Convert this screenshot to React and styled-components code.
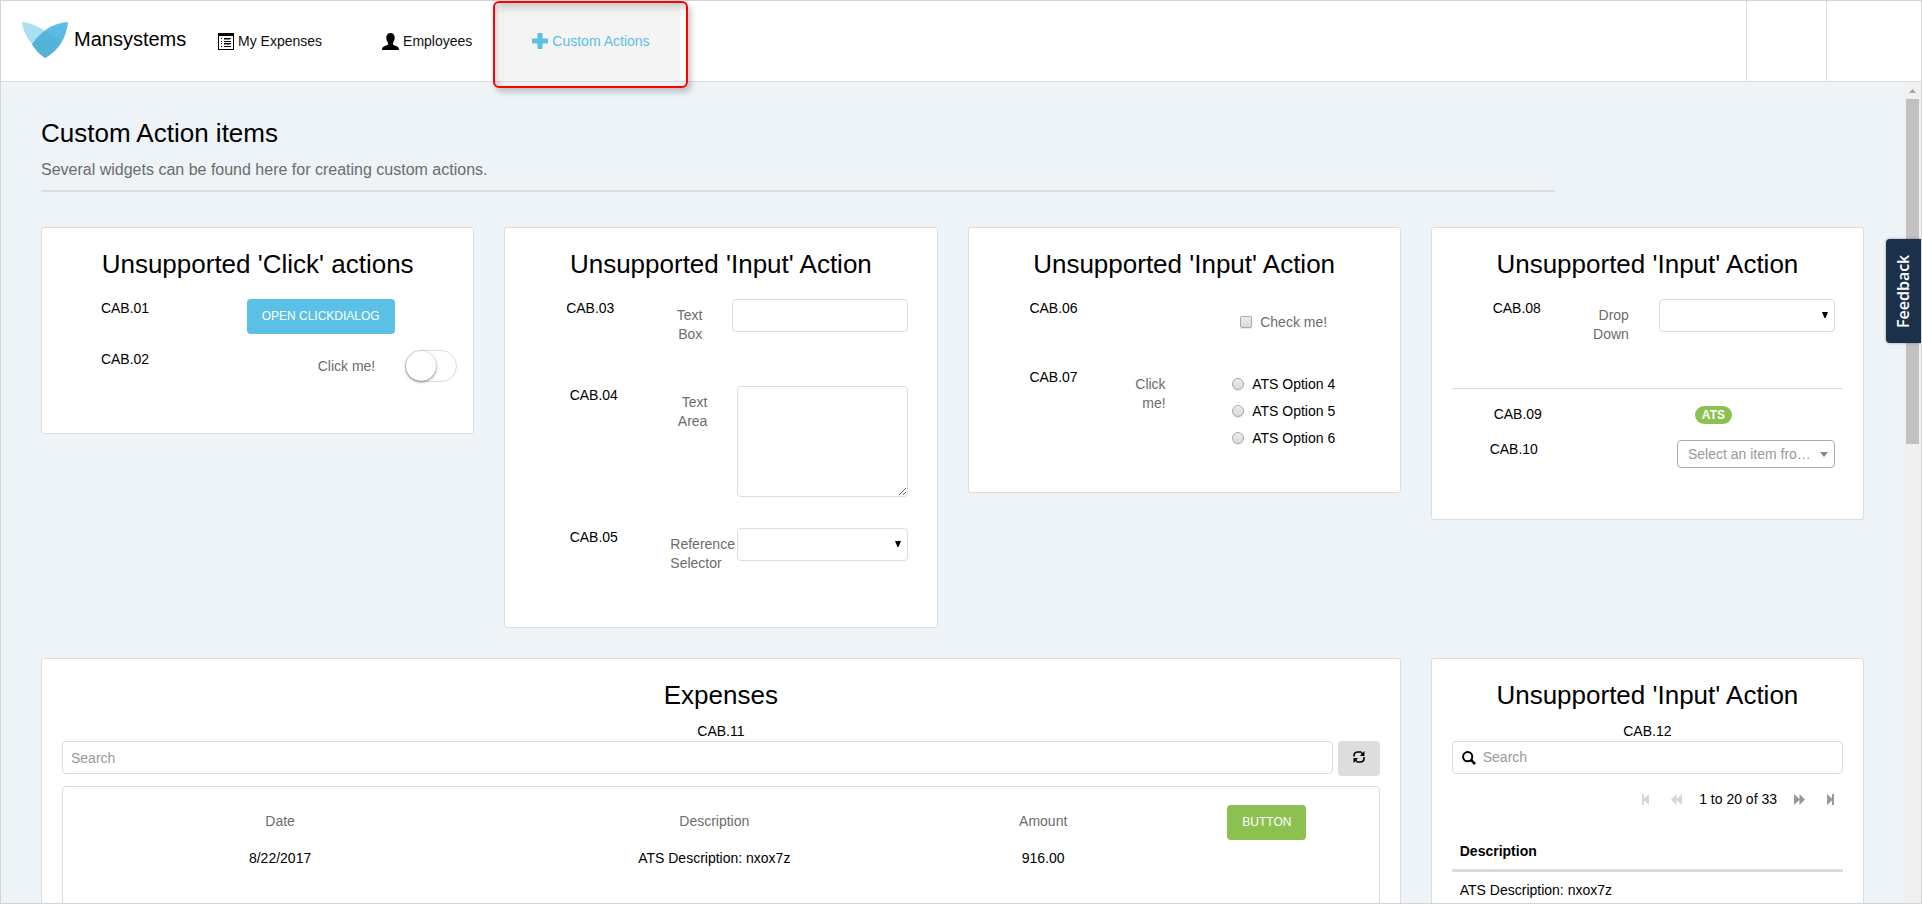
import React from "react";
import styled, { createGlobalStyle, css } from "styled-components";

const line = "#dcdcdc";
const muted = "#6c6c6c";
const blue = "#5bc0e6";
const green = "#8cc152";

const GlobalStyle = createGlobalStyle`
  *, *::before, *::after { box-sizing: border-box; }
  body {
    margin: 0;
    font: 14px/19px "Liberation Sans", Arial, sans-serif;
    color: #000;
  }
  button, input, select, textarea { font: inherit; color: inherit; margin: 0; }
`;

const Frame = styled.div`
  position: relative;
  display: flex;
  flex-direction: column;
  height: 100vh;
  overflow: hidden;
  border: 1px solid #d5d5d5;
  background: #edf3f6;
`;

/* Top bar */
const TopBar = styled.header`
  display: flex;
  flex: none;
  height: 81px;
  background: #fff;
  border-bottom: 1px solid ${line};
`;

const Brand = styled.a`
  display: flex;
  align-items: center;
  gap: 6px;
  width: 187px;
  padding: 0 0 3px 21px;
  color: #000;
  font-size: 20px;
  text-decoration: none;
`;

const Nav = styled.nav`
  display: flex;
  flex: 1;
`;

const NavLink = styled.a`
  position: relative;
  display: flex;
  align-items: center;
  gap: 4px;
  padding: 0 30px;
  color: ${(p) => (p.$active ? blue : "#111")};
  background: ${(p) => (p.$active ? "#f4f4f4" : "transparent")};
  text-decoration: none;
`;

const Highlight = styled.span`
  position: absolute;
  z-index: 2;
  inset: 0 -8px -7px -9px;
  border: 2px solid #fe0000;
  border-radius: 6px;
  box-shadow: 3px 4px 6px rgba(0, 0, 0, 0.22), inset 4px 5px 7px rgba(0, 0, 0, 0.16);
  pointer-events: none;
`;

const BarCell = styled.div`
  width: ${(p) => p.$width}px;
  border-left: 1px solid ${line};
`;

/* Scrolling body */
const Body = styled.div`
  display: flex;
  flex: 1;
  min-height: 0;
`;

const Main = styled.main`
  flex: 1;
  min-width: 0;
  padding: 35px 40px 40px;
  overflow-y: auto;
  scrollbar-width: none;
`;

const Grid = styled.div`
  display: grid;
  grid-template-columns: repeat(12, minmax(0, 1fr));
  gap: 30px;
  align-items: start;
`;

const Intro = styled.div`
  grid-column: span 10;
  margin-bottom: 5px;
  padding-bottom: 9px;
  border-bottom: 2px solid ${line};
`;

const PageTitle = styled.h1`
  margin: 0 0 10px;
  font-size: 26px;
  line-height: 32px;
  font-weight: 400;
`;

const Lead = styled.p`
  margin: 0;
  font-size: 16px;
  line-height: 22px;
  color: ${muted};
`;

const ScrollTrack = styled.div`
  display: flex;
  flex-direction: column;
  align-items: center;
  width: 17px;
  background: #f0f0f0;
`;

const ScrollUp = styled.svg`
  display: block;
  width: 17px;
  height: 17px;
`;

const ScrollThumb = styled.div`
  width: 13px;
  height: 42%;
  background: #c1c1c1;
`;

/* Cards */
const Card = styled.section`
  grid-column: span ${(p) => p.$span || 3};
  padding: 20px;
  background: #fff;
  border: 1px solid ${line};
  border-radius: 3px;
`;

const CardTitle = styled.h2`
  margin: 0 0 11px;
  font-size: 26px;
  line-height: 32px;
  font-weight: 400;
  text-align: center;
`;

const Rows = styled.div`
  padding-bottom: ${(p) => (p.$roomy ? 23 : 0)}px;
`;

const rowColumns = {
  button: "126fr 265fr",
  field: "130fr 77fr 176fr 8fr",
  narrow: "137fr 75fr 171fr 8fr",
  badge: "132fr 259fr",
  picker: "124fr 101fr 158fr 8fr",
};

const Row = styled.div`
  display: grid;
  grid-template-columns: ${(p) =>
    rowColumns[p.$kind]
      .split(" ")
      .map((w) => `minmax(0, ${w})`)
      .join(" ")};
  align-items: start;
  padding: 8px 0;
`;

const Code = styled.div`
  text-align: center;
`;

const FieldLabel = styled.label`
  padding: 7px 30px 26px 8px;
  color: ${muted};
  text-align: right;
`;

const Centered = styled.div`
  display: flex;
  justify-content: center;
`;

const SwitchCell = styled.div`
  display: grid;
  grid-template-columns: 1fr 48px;
  column-gap: 30px;
  text-align: right;
`;

const SwitchLabel = styled.label`
  padding-top: 7px;
  color: ${muted};
`;

const Switch = styled.input`
  appearance: none;
  display: block;
  width: 52px;
  height: 32px;
  border: 1px solid ${line};
  border-radius: 16px;
  background: #fff;
  &::before {
    content: "";
    display: block;
    width: 30px;
    height: 30px;
    border-radius: 50%;
    background: #fff;
    box-shadow: 0 1px 3px rgba(0, 0, 0, 0.5);
  }
`;

const Button = styled.button`
  height: 35px;
  padding: 0 15px;
  border: 0;
  border-radius: 4px;
  background: ${(p) => (p.$tone === "green" ? green : blue)};
  color: #fff;
  font-size: 12px;
  line-height: 19px;
  text-transform: uppercase;
`;

const IconButton = styled.button`
  display: flex;
  flex: none;
  justify-content: center;
  padding: 9px 0 0;
  width: 42px;
  height: 35px;
  border: 0;
  border-radius: 4px;
  background: #ddd;
`;

const fieldBox = css`
  display: block;
  width: 100%;
  height: 33px;
  padding: 0 8px;
  border: 1px solid ${line};
  border-radius: 4px;
  background: #fff;
  &::placeholder { color: #999; opacity: 1; }
`;

const TextInput = styled.input`${fieldBox}`;

const TextArea = styled.textarea`
  ${fieldBox}
  height: 111px;
  margin-bottom: 15px;
`;

const SelectWrap = styled.div`
  position: relative;
`;

const Select = styled.select`
  ${fieldBox}
  appearance: none;
`;

const PickerSelect = styled(Select)`
  height: 28px;
  padding: 0 20px 0 10px;
  border-color: #aaa;
  color: #999;
`;

const Arrow = styled.svg`
  position: absolute;
  top: ${(p) => (p.$small ? 12 : 13)}px;
  right: 7px;
  display: block;
  pointer-events: none;
`;

const OptionList = styled.div`
  padding-bottom: 15px;
`;

const Option = styled.label`
  display: flex;
  align-items: center;
  gap: 8px;
  padding: ${(p) => (p.$muted ? "13px 0 5px" : "6px 0 1px")};
  line-height: 20px;
  color: ${(p) => (p.$muted ? muted : "#000")};
`;

const Tick = styled.input`
  appearance: none;
  width: 12px;
  height: 12px;
  border: 1px solid #a9a9a9;
  border-radius: ${(p) => (p.type === "radio" ? "50%" : "2px")};
  background: linear-gradient(#ececec, #dadada);
  box-shadow: 0 1px 1px rgba(0, 0, 0, 0.1);
`;

const Divider = styled.hr`
  height: 1px;
  margin: 10px 0 8px;
  border: 0;
  background: ${line};
`;

const Badge = styled.span`
  height: 18px;
  margin-top: 1px;
  padding: 0 7px;
  border-radius: 9px;
  background: ${green};
  color: #fff;
  font-size: 12px;
  font-weight: 700;
  line-height: 18px;
`;

/* Expenses */
const SearchRow = styled.div`
  display: flex;
  gap: 5px;
  margin-bottom: 10px;
`;

const ListBox = styled.div`
  padding: 10px 0 60px;
  border: 1px solid ${line};
  border-radius: 4px;
`;

const ExpenseTable = styled.table`
  width: 100%;
  table-layout: fixed;
  border-collapse: collapse;
  text-align: center;
  th {
    padding: 15px 0 18px;
    color: ${muted};
    font-weight: 400;
  }
  td { padding: 0; }
  td[rowspan] { padding-top: 8px; vertical-align: top; }
`;

const Col = styled.col`
  width: ${(p) => p.$width}%;
`;

/* Search grid */
const SearchBox = styled.label`
  ${fieldBox}
  display: flex;
  align-items: center;
  gap: 7px;
  padding: 0 9px;
`;

const BareInput = styled.input`
  flex: 1;
  min-width: 0;
  padding: 0;
  border: 0;
  outline: 0;
  background: none;
  &::placeholder { color: #999; opacity: 1; }
`;

const Pager = styled.div`
  display: flex;
  justify-content: flex-end;
  gap: 6px;
  padding: 16px 0 25px;
`;

const PagerText = styled.span`
  padding: 0 4px;
`;

const PagerButton = styled.button`
  display: flex;
  justify-content: center;
  align-items: center;
  width: 25px;
  height: 19px;
  padding: 0;
  border: 0;
  background: none;
  color: #999;
  &:disabled { color: #d6d6d6; }
`;

const DataTable = styled.table`
  width: 100%;
  border-collapse: separate;
  border-spacing: 0;
  text-align: left;
  th { padding: 8px; border-bottom: 3px solid ${line}; }
  td { padding: 9px 8px; }
`;

const Feedback = styled.button`
  position: absolute;
  z-index: 3;
  top: 238px;
  right: 0;
  width: 35px;
  height: 104px;
  padding: 0;
  border: 0;
  border-radius: 0 4px 4px 0;
  background: #1b3049;
  color: #fff;
  font: 600 16px/33px "Open Sans", "Noto Sans", sans-serif;
  writing-mode: vertical-rl;
  transform: rotate(180deg);
  box-shadow: 0 0 3px rgba(0, 0, 0, 0.35);
`;

function Logo() {
  return (
    <svg width="46" height="36" viewBox="0 0 46 36" aria-hidden="true">
      <defs>
        <linearGradient id="wing" x1="0" y1="0" x2="0" y2="1">
          <stop offset="0" stopColor="#57c0e8" />
          <stop offset="1" stopColor="#5ab0d4" />
        </linearGradient>
      </defs>
      <path d="M46 0C44.500 15 37 29 23 36C17 32 13 27 10 22C18 10 30 1 46 0Z" fill="url(#wing)" />
      <path d="M22.700 8.700C28 11.500 33 16 35.800 21C32 27 28 33 23 36C17 32 13 27 10 22C13.500 16.500 18 12 22.700 8.700Z" fill="#55b3d9" />
      <path d="M0 0C1 8 4 15 10 22C13.500 16.500 18 12 22.700 8.700C16 4 8 1 0 0Z" fill="#a9dff3" />
    </svg>
  );
}

function ListIcon() {
  return (
    <svg width="16" height="17" viewBox="0 0 16 17" aria-hidden="true">
      <path fillRule="evenodd" d="M0 0H16V17H0ZM1 3V16H15V3Z" />
      <path d="M3 5h1v1H3zM3 8h1v1H3zM3 10h1v1H3zM3 13h1v1H3zM6 5h7v1H6zM6 8h7v1H6zM6 10h7v1H6zM6 13h7v1H6z" />
      <path d="M6 6h6v1H6zM6 11h6v1H6z" opacity=".5" />
    </svg>
  );
}

function UserIcon() {
  return (
    <svg width="17" height="17" viewBox="0 0 17 17" aria-hidden="true">
      <path d="M8.500 0C11 0 12.700 1.800 12.700 4.500C12.700 6.800 12 8.600 11 9.700V11.600C11 12.300 16 13.300 16.600 14.900C16.900 15.600 17 16.300 17 17H0C0 16.300 .1 15.600 .4 14.900C1 13.300 6 12.300 6 11.600V9.700C5 8.600 4.300 6.800 4.300 4.500C4.300 1.800 6 0 8.500 0Z" />
    </svg>
  );
}

function PlusIcon() {
  return (
    <svg width="16" height="16" viewBox="0 0 16 16" fill="currentColor" aria-hidden="true">
      <path d="M6.500 0h3q1 0 1 1v4.500h4.500q1 0 1 1v3q0 1-1 1h-4.500v4.500q0 1-1 1h-3q-1 0-1-1v-4.500H1q-1 0-1-1v-3q0-1 1-1h4.500V1q0-1 1-1z" />
    </svg>
  );
}

function RefreshIcon() {
  return (
    <svg width="12" height="14" viewBox="0 0 12 14" aria-hidden="true">
      <path d="M1 6.500V5.500Q1 2 5 2H8.500M11 7V8.500Q11 12 7 12H3.500" fill="none" stroke="#000" strokeWidth="1.600" />
      <path d="M11.500 1V6H7L8.500 4.200L7.500 2.500L10 2.500ZM.5 13V8H5L3.500 9.800L4.500 11.500L2 11.500Z" />
    </svg>
  );
}

function SearchIcon() {
  return (
    <svg width="14" height="14" viewBox="0 0 14 14" fill="none" stroke="#000" aria-hidden="true">
      <circle cx="5.700" cy="5.700" r="4.600" strokeWidth="2" />
      <path d="M9.200 9.200L13 13" strokeWidth="2.600" />
    </svg>
  );
}

const pagerShapes = {
  first: { w: 7, d: "M0 0H2V4.500L7 0V11L2 6.500V11H0Z" },
  prev: { w: 11, d: "M0 5.500L5.500 0V5L11 0V11L5.500 6V11Z" },
  next: { w: 11, d: "M11 5.500L5.500 0V5L0 0V11L5.500 6V11Z" },
  last: { w: 7, d: "M7 0H5V4.500L0 0V11L5 6.500V11H7Z" },
};

function PagerIcon({ name }) {
  const { w, d } = pagerShapes[name];
  return (
    <svg width={w} height="11" viewBox={`0 0 ${w} 11`} fill="currentColor" aria-hidden="true">
      <path d={d} />
    </svg>
  );
}

function DropDown({ id }) {
  return (
    <SelectWrap>
      <Select id={id} defaultValue="">
        <option value="" />
      </Select>
      <Arrow width="6" height="6" viewBox="0 0 6 6">
        <path d="M0 0H6L3.500 6H2.500Z" />
      </Arrow>
    </SelectWrap>
  );
}

function Item({ code, kind = "field", children }) {
  return (
    <Row $kind={kind}>
      <Code>{code}</Code>
      {children}
    </Row>
  );
}

export default function App() {
  return (
    <>
      <GlobalStyle />
      <Frame>
        <TopBar>
          <Brand href="#">
            <Logo />
            Mansystems
          </Brand>
          <Nav>
            <NavLink href="#expenses"><ListIcon />My Expenses</NavLink>
            <NavLink href="#employees"><UserIcon />Employees</NavLink>
            <NavLink href="#actions" $active>
              <PlusIcon />Custom Actions
              <Highlight />
            </NavLink>
          </Nav>
          <BarCell $width={80} />
          <BarCell $width={95} />
        </TopBar>

        <Body>
          <Main>
            <Grid>
              <Intro>
                <PageTitle>Custom Action items</PageTitle>
                <Lead>Several widgets can be found here for creating custom actions.</Lead>
              </Intro>

              <Card>
                <CardTitle>Unsupported 'Click' actions</CardTitle>
                <Rows $roomy>
                  <Item code="CAB.01" kind="button">
                    <Centered><Button>Open ClickDialog</Button></Centered>
                  </Item>
                  <Item code="CAB.02" kind="button">
                    <SwitchCell>
                      <SwitchLabel htmlFor="switch">Click me!</SwitchLabel>
                      <Switch id="switch" type="checkbox" role="switch" />
                    </SwitchCell>
                  </Item>
                </Rows>
              </Card>

              <Card>
                <CardTitle>Unsupported 'Input' Action</CardTitle>
                <Rows>
                  <Item code="CAB.03">
                    <FieldLabel htmlFor="textbox">Text Box</FieldLabel>
                    <TextInput id="textbox" type="text" />
                  </Item>
                  <Item code="CAB.04" kind="narrow">
                    <FieldLabel htmlFor="textarea">Text Area</FieldLabel>
                    <TextArea id="textarea" />
                  </Item>
                  <Item code="CAB.05" kind="narrow">
                    <FieldLabel htmlFor="reference">Reference Selector</FieldLabel>
                    <DropDown id="reference" />
                  </Item>
                </Rows>
              </Card>

              <Card>
                <CardTitle>Unsupported 'Input' Action</CardTitle>
                <Rows>
                  <Item code="CAB.06">
                    <span />
                    <Centered>
                      <OptionList>
                        <Option $muted><Tick type="checkbox" />Check me!</Option>
                      </OptionList>
                    </Centered>
                  </Item>
                  <Item code="CAB.07">
                    <FieldLabel as="div" id="options-label">Click me!</FieldLabel>
                    <Centered role="radiogroup" aria-labelledby="options-label">
                      <OptionList>
                        {[4, 5, 6].map((n) => (
                          <Option key={n}><Tick type="radio" name="option" />ATS Option {n}</Option>
                        ))}
                      </OptionList>
                    </Centered>
                  </Item>
                </Rows>
              </Card>

              <Card>
                <CardTitle>Unsupported 'Input' Action</CardTitle>
                <Rows $roomy>
                  <Item code="CAB.08">
                    <FieldLabel htmlFor="dropdown">Drop Down</FieldLabel>
                    <DropDown id="dropdown" />
                  </Item>
                  <Divider />
                  <Item code="CAB.09" kind="badge">
                    <Centered><Badge>ATS</Badge></Centered>
                  </Item>
                  <Item code="CAB.10" kind="picker">
                    <span />
                    <SelectWrap>
                      <PickerSelect aria-label="CAB.10">
                        <option>Select an item fro…</option>
                      </PickerSelect>
                      <Arrow $small width="8" height="5" viewBox="0 0 8 5" fill="#888">
                        <path d="M0 0H8L4 5Z" />
                      </Arrow>
                    </SelectWrap>
                  </Item>
                </Rows>
              </Card>

              <Card $span={9}>
                <CardTitle>Expenses</CardTitle>
                <Code>CAB.11</Code>
                <SearchRow>
                  <TextInput type="text" placeholder="Search" aria-label="Search expenses" />
                  <IconButton aria-label="Refresh"><RefreshIcon /></IconButton>
                </SearchRow>
                <ListBox>
                  <ExpenseTable>
                    <colgroup>
                      <Col $width={33} />
                      <Col $width={33} />
                      <Col $width={17} />
                      <Col $width={17} />
                    </colgroup>
                    <tbody>
                      <tr>
                        <th scope="col">Date</th>
                        <th scope="col">Description</th>
                        <th scope="col">Amount</th>
                        <td rowSpan={2}><Button $tone="green">Button</Button></td>
                      </tr>
                      <tr>
                        <td>8/22/2017</td>
                        <td>ATS Description: nxox7z</td>
                        <td>916.00</td>
                      </tr>
                    </tbody>
                  </ExpenseTable>
                </ListBox>
              </Card>

              <Card>
                <CardTitle>Unsupported 'Input' Action</CardTitle>
                <Code>CAB.12</Code>
                <SearchBox>
                  <SearchIcon />
                  <BareInput type="text" placeholder="Search" aria-label="Search descriptions" />
                </SearchBox>
                <Pager>
                  <PagerButton disabled aria-label="First page"><PagerIcon name="first" /></PagerButton>
                  <PagerButton disabled aria-label="Previous page"><PagerIcon name="prev" /></PagerButton>
                  <PagerText>1 to 20 of 33</PagerText>
                  <PagerButton aria-label="Next page"><PagerIcon name="next" /></PagerButton>
                  <PagerButton aria-label="Last page"><PagerIcon name="last" /></PagerButton>
                </Pager>
                <DataTable>
                  <thead>
                    <tr><th scope="col">Description</th></tr>
                  </thead>
                  <tbody>
                    <tr><td>ATS Description: nxox7z</td></tr>
                  </tbody>
                </DataTable>
              </Card>
            </Grid>
          </Main>
          <ScrollTrack>
            <ScrollUp viewBox="0 0 17 17" aria-hidden="true">
              <path d="M5 11L8.500 7L12 11Z" fill="#a3a3a3" />
            </ScrollUp>
            <ScrollThumb />
          </ScrollTrack>
        </Body>
        <Feedback>Feedback</Feedback>
      </Frame>
    </>
  );
}
